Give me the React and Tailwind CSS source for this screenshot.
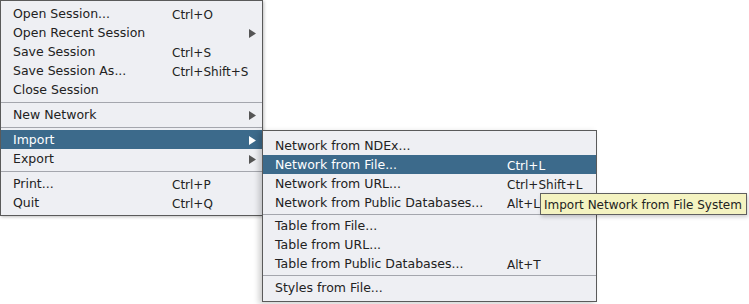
import React from 'react';

const fileItems = [
  { label: 'Open Session...', key: 'Ctrl+O' },
  { label: 'Open Recent Session', sub: true },
  { label: 'Save Session', key: 'Ctrl+S' },
  { label: 'Save Session As...', key: 'Ctrl+Shift+S' },
  { label: 'Close Session' },
  { sep: 'h-[6px]' },
  { label: 'New Network', sub: true },
  { sep: 'h-[6px]' },
  { label: 'Import', sub: true, active: true },
  { label: 'Export', sub: true },
  { sep: 'h-[6px]' },
  { label: 'Print...', key: 'Ctrl+P' },
  { label: 'Quit', key: 'Ctrl+Q' },
];

const importItems = [
  { label: 'Network from NDEx...' },
  { label: 'Network from File...', key: 'Ctrl+L', active: true },
  { label: 'Network from URL...', key: 'Ctrl+Shift+L' },
  { label: 'Network from Public Databases...', key: 'Alt+L' },
  { sep: 'h-[4px]' },
  { label: 'Table from File...' },
  { label: 'Table from URL...' },
  { label: 'Table from Public Databases...', key: 'Alt+T' },
  { sep: 'h-[5px]' },
  { label: 'Styles from File...' },
];

const Arrow = ({ active }) => (
  <svg width="7" height="9" viewBox="0 0 7 9" className="shrink-0">
    <path d="M0 0 L7 4.5 L0 9 Z" fill={active ? '#ffffff' : '#555555'} />
  </svg>
);

const Menu = ({ items, labelW, className }) => (
  <div className={'bg-[#eeeff3] border border-[#5a5a5a] ' + className}>
    {items.map((it, i) =>
      it.sep ? (
        <div key={i} className={it.sep + ' flex items-center'}>
          <div className="h-px w-full bg-[#a4a6ad]" />
        </div>
      ) : (
        <div
          key={i}
          className={
            'h-[19px] flex items-center pt-[2px] pl-3 pr-[6px] ' +
            (it.active ? 'bg-[#3c6a8b] text-white' : 'text-[#222222]')
          }
        >
          <span className="shrink-0 whitespace-nowrap text-[12.5px]" style={{ width: labelW }}>{it.label}</span>
          <span className="flex-1 whitespace-nowrap text-[12px]">{it.key}</span>
          {it.sub && <Arrow active={it.active} />}
        </div>
      )
    )}
  </div>
);

export default function App() {
  return (
    <div className="w-[749px] h-[304px] bg-white relative overflow-hidden leading-none font-['DejaVu_Sans',sans-serif]">
      <div className="flex items-start">
        <Menu items={fileItems} labelW={159} className="w-[263px] py-[3px] shadow-[1px_1px_3px_rgba(0,0,0,0.25)]" />
        <Menu
          items={importItems}
          labelW={232}
          className="w-[335px] mt-[130px] -ml-px pt-[5px] pb-[4px] shadow-[-3px_2px_6px_rgba(0,0,0,0.2)]"
        />
      </div>
      <div className="absolute left-[540px] top-[193px] h-[22px] pt-[2px] pl-[3px] pr-[4px] flex items-center whitespace-nowrap text-[12px] bg-[#f4f3c1] border border-[#606060] text-[#222222] shadow-[1px_2px_4px_rgba(0,0,0,0.2)]">
        Import Network from File System
      </div>
    </div>
  );
}
